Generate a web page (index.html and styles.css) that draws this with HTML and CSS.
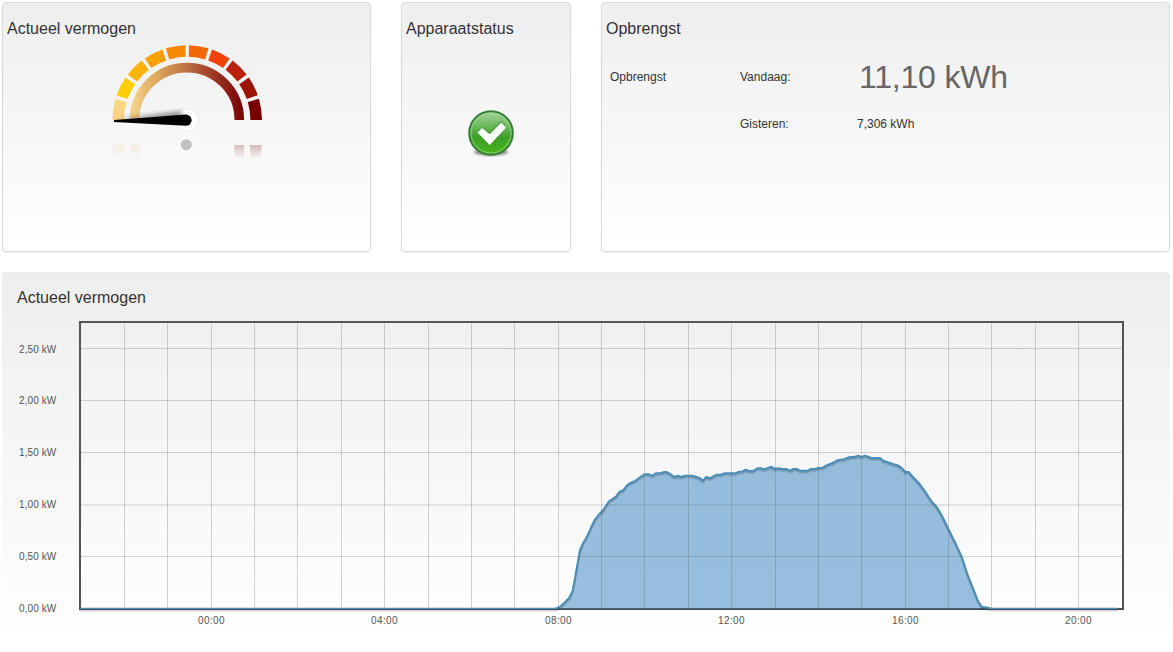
FILE: index.html
```html
<!DOCTYPE html>
<html lang="nl">
<head>
    <meta charset="utf-8">
    <title>Actueel vermogen</title>
    <link rel="stylesheet" href="styles.css">
</head>
<body>

    <div class="widgets">
        <div class="widget">
            <h2>Actueel vermogen</h2>
            <svg class="gauge" width="160" height="120" viewBox="107 42 160 120">
                <defs>
                    <linearGradient id="ring" x1="0" x2="1" y1="0" y2="0">
                        <stop offset="0" stop-color="#f3d08a"/>
                        <stop offset="0.2" stop-color="#dfa95e"/>
                        <stop offset="0.5" stop-color="#bd7042"/>
                        <stop offset="0.8" stop-color="#983024"/>
                        <stop offset="1" stop-color="#7a0a08"/>
                    </linearGradient>
                    <linearGradient id="fade" x1="0" x2="0" y1="0" y2="1">
                        <stop offset="0" stop-color="#f8f8f8" stop-opacity=".2"/>
                        <stop offset="1" stop-color="#f8f8f8"/>
                    </linearGradient>
                    <filter id="soft" x="-20%" y="-100%" width="140%" height="300%">
                        <feGaussianBlur stdDeviation="2"/>
                    </filter>
                </defs>
                <g class="segments">
                    <circle cx="187.2" cy="120" r="69" pathLength="20" stroke="#fad684" stroke-dasharray=".92 19.08" stroke-dashoffset="-10"/>
                    <circle cx="187.2" cy="120" r="69" pathLength="20" stroke="#fdcf02" stroke-dasharray=".84 19.16" stroke-dashoffset="-11.08"/>
                    <circle cx="187.2" cy="120" r="69" pathLength="20" stroke="#fdb206" stroke-dasharray=".84 19.16" stroke-dashoffset="-12.08"/>
                    <circle cx="187.2" cy="120" r="69" pathLength="20" stroke="#faa008" stroke-dasharray=".84 19.16" stroke-dashoffset="-13.08"/>
                    <circle cx="187.2" cy="120" r="69" pathLength="20" stroke="#f68a05" stroke-dasharray=".84 19.16" stroke-dashoffset="-14.08"/>
                    <circle cx="187.2" cy="120" r="69" pathLength="20" stroke="#f06806" stroke-dasharray=".84 19.16" stroke-dashoffset="-15.08"/>
                    <circle cx="187.2" cy="120" r="69" pathLength="20" stroke="#f04406" stroke-dasharray=".84 19.16" stroke-dashoffset="-16.08"/>
                    <circle cx="187.2" cy="120" r="69" pathLength="20" stroke="#b8200d" stroke-dasharray=".84 19.16" stroke-dashoffset="-17.08"/>
                    <circle cx="187.2" cy="120" r="69" pathLength="20" stroke="#9a1405" stroke-dasharray=".84 19.16" stroke-dashoffset="-18.08"/>
                    <circle cx="187.2" cy="120" r="69" pathLength="20" stroke="#780000" stroke-dasharray=".92 19.08" stroke-dashoffset="-19.08"/>
                </g>
                <path d="M134.5 120a52.4 52.4 0 0 1 104.8 0" fill="none" stroke="url(#ring)" stroke-width="9.6"/>
                <circle cx="186.7" cy="120" r="11.3" fill="#fff" stroke="#e4e4e4" stroke-width=".7"/>
                <path d="M115 119L182 111V119Z" fill="#000" opacity=".4" filter="url(#soft)"/>
                <path d="M114 120.1L186 114.6a5.6 5.6 0 0 1 0 11.2L114 122Z" fill="#000"/>
                <!-- reflection -->
                <circle cx="186.5" cy="144.8" r="8" fill="#fff" opacity=".4"/>
                <circle cx="186.3" cy="144.8" r="5.6" fill="#c2c2c2"/>
                <g opacity=".32">
                    <path d="M112.3 145h12v13h-10z" fill="#fad99a"/>
                    <path d="M129.7 145h9.6v13h-7z" fill="#f5cf95"/>
                    <path d="M234 145h10v13h-9z" fill="#7a1515"/>
                    <path d="M249.5 145H262l-2 13h-9z" fill="#780000"/>
                </g>
                <path d="M110 145h30v14h-30zM232 145h32v14h-32z" fill="url(#fade)"/>
            </svg>
        </div>

        <div class="widget">
            <h2>Apparaatstatus</h2>
            <svg class="status" width="52" height="52" viewBox="0 0 52 52">
                <defs>
                    <linearGradient id="ball" x1="0" x2="0" y1="0" y2="1">
                        <stop offset="0" stop-color="#a3d69c"/>
                        <stop offset=".4" stop-color="#62b352"/>
                        <stop offset=".6" stop-color="#3da025"/>
                        <stop offset="1" stop-color="#48b31a"/>
                    </linearGradient>
                    <filter id="blur"><feGaussianBlur stdDeviation="1"/></filter>
                </defs>
                <ellipse cx="26" cy="45" rx="17" ry="4" fill="#000" opacity=".4" filter="url(#blur)"/>
                <circle cx="26" cy="26" r="21.8" fill="url(#ball)" stroke="#347d36" stroke-width="2"/>
                <circle cx="26" cy="26" r="20" fill="none" stroke="#a5dc90" stroke-width="1.2" opacity=".6"/>
                <path d="M13 24.5l4.2-4 7.3 6.5 11-12.5 5 4.8L24.5 37Z" fill="#1d6d16" opacity=".5" filter="url(#blur)"/>
                <path d="M12.5 25.5l4.5-4.5 7.7 6.2 11.5-11.4 5 4.8L24.7 38Z" fill="#fff"/>
            </svg>
        </div>

        <div class="widget">
            <h2>Opbrengst</h2>
            <div class="yield">
                <span>Opbrengst</span>
                <span>Vandaag:</span>
                <span class="today">11,10 kWh</span>
                <span class="yesterday">Gisteren:</span>
                <span>7,306 kWh</span>
            </div>
        </div>
    </div>

    <div class="chart-panel">
        <h2>Actueel vermogen</h2>
        <svg class="chart" width="1168" height="320" viewBox="2 315 1168 320">
            <rect class="frame" x="80" y="322" width="1043" height="287"/>
            <g id="power"></g>
            <path class="grid" d="M124.5 323V608M167.5 323V608M211.5 323V608M254.5 323V608M297.5 323V608M341.5 323V608M384.5 323V608M428.5 323V608M471.5 323V608M514.5 323V608M558.5 323V608M601.5 323V608M644.5 323V608M688.5 323V608M731.5 323V608M775.5 323V608M818.5 323V608M861.5 323V608M905.5 323V608M948.5 323V608M991.5 323V608M1035.5 323V608M1078.5 323V608"/>
            <path class="grid" d="M81 348.5H1122M81 400.5H1122M81 452.5H1122M81 505H1122M81 556.5H1122"/>
            <path class="baseline" d="M79 609.5H1124"/>
            <g class="labels">
                <text x="19" y="353">2,50 kW</text>
                <text x="19" y="404">2,00 kW</text>
                <text x="19" y="456">1,50 kW</text>
                <text x="19" y="508">1,00 kW</text>
                <text x="19" y="560">0,50 kW</text>
                <text x="19" y="612">0,00 kW</text>
            </g>
            <g class="labels hours">
                <text x="198" y="624">00:00</text>
                <text x="371" y="624">04:00</text>
                <text x="545" y="624">08:00</text>
                <text x="718" y="624">12:00</text>
                <text x="892" y="624">16:00</text>
                <text x="1065" y="624">20:00</text>
            </g>
        </svg>
    </div>

    <script src="chart.js"></script>
</body>
</html>
```
FILE: styles.css
```css
body {
    font-family: Arial, "Liberation Sans", sans-serif;
    font-size: 12px;
    color: #333;
    margin: 0;
    padding: 2px 3px 0 2px;
    background-color: #fff;
}

h2 {
    margin: 0;
    font-size: 16px;
    font-weight: normal;
    line-height: 20px;
}

.widgets {
    display: grid;
    grid-template-columns: 369px 170px 569px;
    gap: 30px;
}

.widget {
    box-sizing: border-box;
    height: 250px;
    padding: 16px 4px 0;
    border: 1px solid #d9d9d9;
    border-radius: 4px;
    background: linear-gradient(#eee, #fff);
    box-shadow: 0 1px 2px rgba(0, 0, 0, 0.06);
}

.gauge {
    display: block;
    margin: 3px 0 0 100px;
}

.segments circle {
    fill: none;
    stroke-width: 11.6;
}

.status {
    display: block;
    margin: 68px auto 0 59px;
}

.yield {
    display: grid;
    grid-template-columns: 130px 117px 1fr;
    grid-template-rows: 46px 47px;
    align-items: center;
    padding: 15px 4px 0;
}

.today {
    padding-left: 2px;
    font-size: 32px;
    letter-spacing: -0.2px;
    color: #666;
}

.yesterday {
    grid-column: 2;
}

.chart-panel {
    box-sizing: border-box;
    width: 1168px;
    height: 373px;
    margin-top: 20px;
    padding-top: 16px;
    border-radius: 4px;
    background: linear-gradient(#eee, #fff);
    box-shadow: 0 1px 1px rgba(0, 0, 0, 0.06);
}

.chart-panel h2 {
    padding-left: 15px;
}

.chart {
    display: block;
    margin-top: 7px;
}

.grid {
    fill: none;
    stroke: rgba(84, 84, 84, 0.25);
}

.frame {
    fill: none;
    stroke: #545454;
    stroke-width: 2;
}

.baseline {
    stroke: rgba(60, 60, 60, 0.6);
}

.area {
    fill: rgba(49, 130, 189, 0.5);
}

.line {
    fill: none;
    stroke: #4c8db8;
    stroke-width: 2;
    stroke-linejoin: round;
}

.shadow {
    fill: none;
    stroke: rgba(0, 0, 0, 0.1);
    stroke-width: 2;
    stroke-linejoin: round;
}

.labels {
    font-size: 10px;
    letter-spacing: 0.1px;
    fill: #545454;
}

.hours {
    letter-spacing: 0.4px;
}
```
FILE: chart.js
```js
// x, y of every reading
var readings = [
    [80, 608.7], [555.7, 608.7], [560, 606.7], [565, 602.3], [569.3, 597.7], [572.7, 590.7],
    [574.7, 580], [580, 550], [583.3, 543], [587.3, 536], [590.7, 528.3], [594.7, 520],
    [598.7, 514.7], [603.3, 510], [609, 501.3], [616, 496.7], [619.7, 491.7], [623.3, 490.3],
    [627.3, 485], [630.7, 482.7], [634.7, 481.3], [640, 477.3], [644.7, 474.3], [648.7, 474.3],
    [652.3, 475.7], [655.7, 473.3], [660.7, 473], [664.3, 472], [666.7, 472], [670.7, 474.3],
    [674, 477], [677.7, 475.7], [681, 477], [684.7, 475.7], [692, 475.7], [696.7, 477],
    [700, 478.3], [703, 480.7], [706.3, 477], [710.3, 478.3], [713.7, 476], [716.7, 474.7],
    [720.7, 474.7], [724.7, 473.3], [735.7, 473.3], [739, 471.7], [742.3, 471.7], [745.7, 469.7],
    [749, 471], [753.3, 471], [757.3, 468.2], [760.7, 468.2], [764, 469.3], [767.3, 468.2],
    [771.3, 466.8], [775.3, 469], [778.7, 468.2], [782, 469], [786, 469], [790, 470.7],
    [793.3, 469], [796.7, 469], [800, 470.7], [807.3, 470.7], [811.3, 469], [814.7, 469],
    [818.7, 468], [822.7, 467.7], [826, 465.7], [833.3, 462.7], [837.3, 460.3], [844, 459.3],
    [850, 457], [854.7, 457], [858, 455.6], [861.3, 457], [865.3, 455.6], [871.3, 458],
    [880, 458], [883.3, 460.7], [890, 463], [898.3, 465.7], [901.7, 468], [905.3, 472],
    [908.7, 472], [912, 476], [919.3, 483.7], [925, 491.3], [931, 500.7], [936.7, 507],
    [941.7, 515.3], [948.3, 529], [955, 542.3], [961.7, 556.7], [968.3, 576.7], [975, 593.3],
    [978, 601], [981.7, 606.7], [988.3, 607.7], [991.7, 608.7], [1118, 608.7]
];

var line = readings.map(function(p) { return p.join(","); }).join(" ");

document.getElementById("power").innerHTML = `
    <polygon class="area" points="${line} 1118,609 80,609"/>
    <polyline class="shadow" points="${line}" transform="translate(0 2)"/>
    <polyline class="shadow" points="${line}" transform="translate(0 1)"/>
    <polyline class="line" points="${line}"/>
`;
```
